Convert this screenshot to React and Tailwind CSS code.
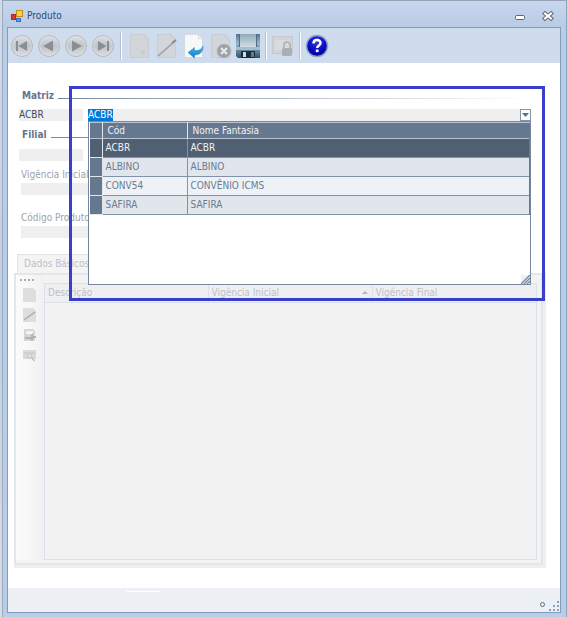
import React, { useEffect, useRef, useState } from "react";

const companies = [
  { code: "ACBR", name: "ACBR" },
  { code: "ALBINO", name: "ALBINO" },
  { code: "CONV54", name: "CONVÊNIO ICMS" },
  { code: "SAFIRA", name: "SAFIRA" },
];

// Shared gradients for the icons
function IconDefs() {
  return (
    <svg className="absolute h-0 w-0" aria-hidden="true">
      <defs>
        <linearGradient id="silver" x1="0" y1="0" x2="0" y2="1">
          <stop offset="0" stopColor="#dde0e4" />
          <stop offset="0.5" stopColor="#c0c3c7" />
          <stop offset="1" stopColor="#dcdfe2" />
        </linearGradient>
        <linearGradient id="steel" x1="0" y1="0" x2="0" y2="1">
          <stop offset="0" stopColor="#54768f" />
          <stop offset="0.4" stopColor="#9ab6c7" />
          <stop offset="1" stopColor="#2f536e" />
        </linearGradient>
        <linearGradient id="shutter" x1="0" y1="0" x2="0" y2="1">
          <stop offset="0" stopColor="#8fabbb" />
          <stop offset="1" stopColor="#cfdde4" />
        </linearGradient>
        <radialGradient id="help" cx="0.5" cy="0.3" r="0.7">
          <stop offset="0" stopColor="#3a3ae6" />
          <stop offset="0.6" stopColor="#0a0ac4" />
          <stop offset="1" stopColor="#05058c" />
        </radialGradient>
        <linearGradient id="arrow" x1="0" y1="0" x2="0" y2="1">
          <stop offset="0" stopColor="#4cc0ee" />
          <stop offset="1" stopColor="#1272c0" />
        </linearGradient>
      </defs>
    </svg>
  );
}

function NavIcon({ children }) {
  return (
    <svg width="22" height="22" viewBox="0 0 22 22">
      <circle cx="11" cy="11" r="10.5" fill="url(#silver)" stroke="#b6bac0" />
      <circle cx="11" cy="11" r="9.2" fill="none" stroke="#e2e4e8" strokeOpacity="0.6" />
      <g fill="#8b8f95">{children}</g>
    </svg>
  );
}

function PageIcon({ fill = "#d2d5d9", stroke = "#c8cdd4", children }) {
  return (
    <svg width="22" height="26" viewBox="0 0 22 26">
      <path d="M1.5 1.5h14l4 4v19h-18z" fill={fill} stroke={stroke} />
      <path d="M15.5 1.5v4h4" fill="none" stroke={stroke} />
      {children}
    </svg>
  );
}

function ToolButton({ label, narrow, children }) {
  return (
    <button
      type="button"
      aria-label={label}
      className={`flex h-7 items-center justify-center ${narrow ? "w-6" : "w-[27px]"}`}
    >
      {children}
    </button>
  );
}

function Separator() {
  return <div className="mx-1 h-7 w-[2px] border-l border-[#b8c2d0] bg-white" />;
}

function TitleBar() {
  return (
    <header className="flex h-[26px] items-center bg-linear-to-b from-[#c8d7ee] to-[#b9cbe4] pt-1 pr-2 pl-2">
      <svg width="13" height="13" viewBox="0 0 13 13">
        <rect x="0.5" y="4.5" width="4" height="5" fill="#d6382c" stroke="#a03028" />
        <rect x="5.5" y="0.5" width="6" height="6" fill="#fbd04a" stroke="#c58a1c" />
        <rect x="5.5" y="8.5" width="4" height="3" fill="#5c93e0" stroke="#3a6fc0" />
      </svg>
      <h1 className="ml-[3px] text-[#2b4a7c]">Produto</h1>
      <div className="ml-auto flex gap-2">
        <button type="button" aria-label="Minimizar" className="flex h-5 w-5 items-center justify-center">
          <svg width="12" height="12" viewBox="0 0 12 12">
            <rect x="1.5" y="5.5" width="9" height="4" rx="1" fill="#fff" stroke="#5f6672" />
          </svg>
        </button>
        <button type="button" aria-label="Fechar" className="flex h-5 w-5 items-center justify-center">
          <svg width="12" height="12" viewBox="0 0 12 12" strokeLinecap="square">
            <path d="M3 3.500l6 5M9 3.500l-6 5" stroke="#5f6672" strokeWidth="4" />
            <path d="M3 3.500l6 5M9 3.500l-6 5" stroke="#fff" strokeWidth="2" />
          </svg>
        </button>
      </div>
    </header>
  );
}

function Toolbar() {
  return (
    <div className="flex h-[35px] items-center bg-[#cfdced]">
      <ToolButton label="Primeiro">
        <NavIcon>
          <path d="M5 6h2v10H5zM16 6v10l-8.500-5z" />
        </NavIcon>
      </ToolButton>
      <ToolButton label="Anterior">
        <NavIcon>
          <path d="M15 5.500v11L5 11z" />
        </NavIcon>
      </ToolButton>
      <ToolButton label="Próximo">
        <NavIcon>
          <path d="M7 5.500v11l10-5.500z" />
        </NavIcon>
      </ToolButton>
      <ToolButton label="Último">
        <NavIcon>
          <path d="M15 6h2v10h-2zM6 6v10l8.500-5z" />
        </NavIcon>
      </ToolButton>
      <Separator />
      <ToolButton label="Novo">
        <PageIcon>
          <path d="M14 17v5M11.500 19.500h5M12.500 18l3 3M15.500 18l-3 3" stroke="#c6cacf" />
        </PageIcon>
      </ToolButton>
      <ToolButton label="Editar">
        <PageIcon>
          <path d="M2 23L18 9" stroke="#9a9ea4" strokeWidth="1.600" />
          <path d="M16 10l4-3" stroke="#85898f" strokeWidth="2" />
        </PageIcon>
      </ToolButton>
      <ToolButton label="Desfazer">
        <PageIcon fill="#f7f8f8" stroke="#d3dae0">
          <path
            d="M5 19.500l6.500-5v3c4 .4 7-1 8.500-4.500.6 6-3.500 9-8.500 9v3z"
            fill="url(#arrow)"
            stroke="#2484c4"
            strokeWidth="0.500"
          />
        </PageIcon>
      </ToolButton>
      <ToolButton label="Excluir">
        <PageIcon>
          <circle cx="14" cy="18" r="7" fill="#9da1a6" stroke="#b8bbc0" />
          <path d="M11 15l6 6M17 15l-6 6" stroke="#e6e8ea" strokeWidth="2.200" />
        </PageIcon>
      </ToolButton>
      <ToolButton label="Salvar">
        <svg width="26" height="26" viewBox="0 0 26 26">
          <path d="M1 1h24v24H3l-2-2z" fill="url(#steel)" />
          <path d="M5 1h16v13H5z" fill="url(#shutter)" />
          <path d="M1 14h24v3H1z" fill="#a3bece" />
          <path d="M6 18h14v7H6z" fill="#1c2c3a" />
          <path d="M8 19h3v5H8z" fill="#c9dce8" />
          <path d="M16 19h3v5h-3z" fill="#5d7d94" />
          <path d="M4.500 1v13M21.500 1v13" stroke="#4c6d85" />
        </svg>
      </ToolButton>
      <Separator />
      <ToolButton label="Bloquear" narrow>
        <svg width="23" height="24" viewBox="0 0 23 24">
          <rect x="0.500" y="2.500" width="20" height="17" fill="#d0d3d8" stroke="#c6cad0" />
          <path d="M3 6h15v10H3z" fill="#d9dbdf" />
          <path d="M12 14v-3a3 3 0 0 1 6 0v3" fill="none" stroke="#b4b8bd" strokeWidth="2" />
          <rect x="10" y="14" width="10" height="8" rx="1.500" fill="#abafb4" />
        </svg>
      </ToolButton>
      <Separator />
      <ToolButton label="Ajuda" narrow>
        <svg width="24" height="24" viewBox="0 0 24 24">
          <circle cx="12" cy="12" r="10.500" fill="url(#help)" stroke="#8f9fd0" strokeWidth="1.500" />
          <path
            d="M8.500 9.500c0-4.500 7-4.500 7-.5 0 2.500-3.300 2.500-3.300 5"
            fill="none"
            stroke="#fff"
            strokeWidth="2.500"
          />
          <rect x="10.800" y="15.500" width="2.800" height="2.600" fill="#fff" />
        </svg>
      </ToolButton>
    </div>
  );
}

function GroupTitle({ children }) {
  return (
    <div className="mr-7 ml-[14px] flex h-4 items-center gap-1">
      <h2 className="font-bold text-[#66758d]">{children}</h2>
      <div className="mt-1 h-px flex-1 bg-linear-to-r from-[#7789a0] to-white" />
    </div>
  );
}

function CompanyPopup({ selected, onSelect }) {
  return (
    <div className="absolute top-full right-0 left-0 z-10 flex h-[164px] flex-col border border-[#77889f] bg-white pl-px">
      <table className="w-full table-fixed border-collapse">
        <thead>
          <tr className="h-4 border-y border-[#b9c3d0] bg-[#65788f] text-left text-[#f0f3f6]">
            <th className="w-3 border-r border-[#e3e7ec]" aria-label="Linha"></th>
            <th className="w-[85px] border-r border-[#e3e7ec] pl-[5px] font-normal">Cód</th>
            <th className="pl-[5px] font-normal">Nome Fantasia</th>
          </tr>
        </thead>
        <tbody>
          {companies.map((c, i) => {
            const active = c.code === selected;
            const rowColor = active
              ? "bg-[#515f72] text-[#f0f3f6]"
              : i % 2 === 0
                ? "bg-[#eef2f6] text-[#6b7b90]"
                : "bg-[#e1e6ed] text-[#6b7b90]";
            return (
              <tr
                key={c.code}
                onClick={() => onSelect(c.code)}
                className={`h-[19px] border-b border-[#8292a8] ${rowColor}`}
              >
                <td
                  className={`border-r border-b border-[#e3e7ec] ${active ? "bg-[#515f72]" : "bg-[#65788f]"}`}
                ></td>
                <td className="border-r border-[#8292a8] pl-[3px]">{c.code}</td>
                <td className="border-r border-[#65788f] pl-[3px]">{c.name}</td>
              </tr>
            );
          })}
        </tbody>
      </table>
      <svg className="mt-auto ml-auto bg-[#edf1f5]" width="9" height="9" viewBox="0 0 9 9">
        <path d="M0 9L9 0M3 9l6-6M6 9l3-3" stroke="#77889f" strokeWidth="1.300" />
      </svg>
    </div>
  );
}

function CompanyCombo() {
  const [company, setCompany] = useState("ACBR");
  const inputRef = useRef(null);

  useEffect(() => {
    inputRef.current.focus();
    inputRef.current.select();
  }, []);

  return (
    <div className="relative flex h-3 flex-1 bg-[#efefef]">
      <input
        ref={inputRef}
        aria-label="Empresa"
        className="h-3 min-w-0 flex-1 bg-transparent text-[#4a5568] outline-none selection:bg-[#0078d7] selection:text-white"
        value={company}
        onChange={(e) => setCompany(e.target.value)}
      />
      <button
        type="button"
        aria-label="Abrir lista"
        className="flex h-3 w-[11px] items-center justify-center border border-[#8294aa] bg-white"
      >
        <svg width="7" height="4" viewBox="0 0 7 4">
          <path d="M0 0h7L3.500 4z" fill="#5d6f86" />
        </svg>
      </button>
      <CompanyPopup selected={company} onSelect={setCompany} />
    </div>
  );
}

function SideButton({ label, children }) {
  return (
    <button type="button" aria-label={label} className="flex h-5 w-full items-center justify-center">
      <svg width="13" height="14" viewBox="0 0 13 14">
        {children}
      </svg>
    </button>
  );
}

function DetailPanel() {
  return (
    <div className="mr-[14px] ml-[6px] flex flex-1 flex-col">
      <div className="flex" role="tablist">
        <button
          type="button"
          role="tab"
          aria-selected="true"
          className="ml-[3px] h-[19px] border border-b-0 border-[#dfe3ea] bg-[#f4f4f5] px-[6px] text-[#bcc0cb]"
        >
          Dados Básicos
        </button>
      </div>
      <div className="flex flex-1 border-r-3 border-b-3 border-[#efefef]">
        <div className="flex flex-1 border-2 border-[#e3e7ec] bg-[#f3f3f3] pr-1 pb-[3px]">
          <div className="flex w-[28px] flex-col bg-linear-to-r from-[#fbfbfb] via-[#f7f7f7] to-[#f0f0f0] pt-1">
            <div className="ml-1 h-[2px] w-[14px] border-t-2 border-dotted border-[#a9abae]" />
            <div className="flex w-[26px] flex-col pt-1">
              <SideButton label="Novo item">
                <path d="M0 0h10l3 3v11H0z" fill="#dedede" />
              </SideButton>
              <SideButton label="Editar item">
                <path d="M0 0h10l3 3v11H0z" fill="#dedede" />
                <path d="M1 12L12 4" stroke="#aaa" strokeWidth="1.400" />
              </SideButton>
              <SideButton label="Salvar item">
                <path d="M1 1h9l2 2v10H1z" fill="#d6d6d6" />
                <path d="M3 3h7v3H3z" fill="#f4f4f4" />
                <path d="M2 9h6V7l2-2v3h3v2h-2l-2 3-2-2H2z" fill="#b2b2b2" />
              </SideButton>
              <SideButton label="Pesquisar item">
                <path d="M0 2h13v9H0z" fill="#dadada" />
                <path d="M1 5h11" stroke="#c8c8c8" />
                <circle cx="6.500" cy="8" r="2" fill="#e4e4e4" stroke="#c6c6c6" />
                <path d="M8.500 9.500l3 3.500" stroke="#c0c0c0" strokeWidth="1.500" />
              </SideButton>
            </div>
          </div>
          <div className="mt-2 flex-1 border border-[#dbe1ea] bg-[#f2f2f2]">
            <table className="w-full table-fixed border-collapse">
              <thead>
                <tr className="h-[18px] border-b border-[#dbe1ea] bg-[#efeff1] text-left text-[#bcc1c9]">
                  <th className="w-[163px] border-r border-[#dbe1ea] pl-[3px] font-normal">Descrição</th>
                  <th className="w-[164px] border-r border-[#dbe1ea] pl-[3px] font-normal">
                    <div className="flex items-center justify-between pr-1">
                      Vigência Inicial
                      <svg width="6" height="3" viewBox="0 0 6 3">
                        <path d="M0 3h6L3 0z" fill="#b0b3b8" />
                      </svg>
                    </div>
                  </th>
                  <th className="pl-[3px] font-normal">Vigência Final</th>
                </tr>
              </thead>
              <tbody></tbody>
            </table>
          </div>
        </div>
      </div>
    </div>
  );
}

export default function App() {
  return (
    <div className="flex min-h-screen bg-[#bacde6] font-['DejaVu_Sans_Condensed','DejaVu_Sans',sans-serif] text-[10px] leading-3">
      <IconDefs />
      {/* Edge of the window behind */}
      <div className="w-[2px] bg-linear-to-b from-[#d5dbe5] via-[#c3cedd] to-[#d8dde4]" />
      <div className="flex min-w-0 flex-1 flex-col border-t border-r border-l border-t-[#98a3b8] border-r-[#8da4c0] border-l-[#9aabc4]">
        <TitleBar />
        <div className="mr-[5px] mb-1 ml-1 flex flex-1 flex-col border border-[#7f9dbf] bg-white">
          <Toolbar />
          <main className="relative flex flex-1 flex-col pt-[25px]">
            <GroupTitle>Matriz</GroupTitle>
            <div className="mt-[5px] mr-[29px] ml-[11px] flex gap-[5px]">
              <input
                aria-label="Matriz"
                className="h-3 w-16 bg-[#efefef] text-[#3d4a5f]"
                defaultValue="ACBR"
              />
              <CompanyCombo />
            </div>

            <div className="mt-[6px]">
              <GroupTitle>Filial</GroupTitle>
            </div>
            <input aria-label="Filial" className="mt-[6px] ml-[11px] h-3 w-16 bg-[#efefef]" />

            {/* Filters */}
            <div className="mt-[6px] ml-[13px] flex flex-col gap-[15px]">
              <div className="flex flex-col">
                <label htmlFor="validFrom" className="h-4 py-[2px] text-[#9aa2ae]">
                  Vigência Inicial
                </label>
                <input id="validFrom" className="h-3 w-24 bg-[#efefef]" />
              </div>
              <div className="flex flex-col">
                <label htmlFor="productCode" className="h-4 py-[2px] text-[#a0a3a8]">
                  Código Produto
                </label>
                <input id="productCode" className="h-3 w-24 bg-[#efefef]" />
              </div>
            </div>

            <div className="mt-4 mb-5 flex flex-1 flex-col">
              <DetailPanel />
            </div>

            {/* Highlight around the combo */}
            <div className="pointer-events-none absolute top-[23px] right-[15px] left-[61px] h-[215px] border-3 border-[#3a3fcb]" />
          </main>
          <footer className="flex h-6 items-end gap-1 bg-[#edf1f5] pr-px pb-px">
            <div className="mt-[3px] mr-auto ml-[118px] h-px w-[34px] self-start bg-white" />
            <span className="mb-1 h-[5px] w-[5px] rounded-full border border-[#5a6b8c]" />
            <svg width="10" height="10" viewBox="0 0 10 10" fill="#8ba3c4">
              <path d="M8 0h2v2H8zM4 4h2v2H4zM8 4h2v2H8zM0 8h2v2H0zM4 8h2v2H4zM8 8h2v2H8z" />
            </svg>
          </footer>
        </div>
      </div>
    </div>
  );
}
